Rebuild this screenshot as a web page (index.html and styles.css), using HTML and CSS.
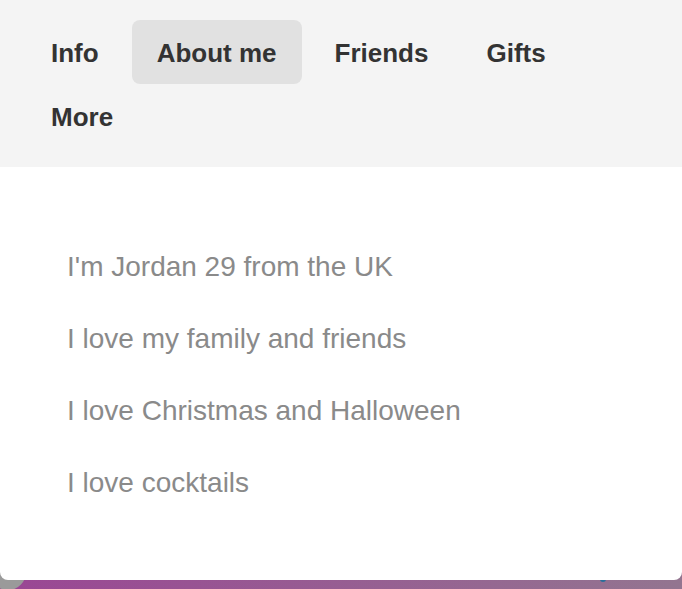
FILE: index.html
```html
<!DOCTYPE html>
<html lang="en">
<head>
    <meta charset="UTF-8">
    <meta name="viewport" content="width=device-width, initial-scale=1.0">
    <title>About me</title>
    <link rel="stylesheet" href="styles.css">
</head>
<body>
    <div class="card">
        <!-- Tabs -->
        <nav class="tabs">
            <a href="#">Info</a>
            <a class="active" href="#">About me</a>
            <a href="#">Friends</a>
            <a href="#">Gifts</a>
            <a href="#">More</a>
        </nav>

        <!-- About me list -->
        <ul class="about">
            <li>I'm Jordan 29 from the UK</li>
            <li>I love my family and friends</li>
            <li>I love Christmas and Halloween</li>
            <li>I love cocktails</li>
        </ul>
    </div>

    <div class="bottom-bar">
        <span class="avatar"></span>
        <span class="dot"></span>
    </div>
</body>
</html>
```

FILE: styles.css
```css
body {
    margin: 0;
    padding: 0;
    font-family: 'Liberation Sans', Arial, sans-serif;
    background: linear-gradient(to right, #9a4694, #937590);
    height: 589px;
    overflow: hidden;
}

.card {
    position: relative;
    z-index: 2;
    height: 580px;
    background-color: #ffffff;
    border-radius: 0 0 8px 8px;
    overflow: hidden;
}

/* Tabs */
.tabs {
    background-color: #f4f4f4;
    padding: 20px 20px 19px 26px;
    display: flex;
    flex-wrap: wrap;
    column-gap: 8px;
}

.tabs a {
    display: flex;
    align-items: center;
    box-sizing: border-box;
    height: 64px;
    padding: 3px 25px 0;
    color: #333333;
    font-size: 26px;
    font-weight: bold;
    text-decoration: none;
    border-radius: 8px;
}

.tabs a.active {
    background-color: #e1e1e1;
}

/* About list */
.about {
    list-style: none;
    margin: 0;
    padding: 64px 20px 0 67px;
}

.about li {
    padding: 20px 0;
    font-size: 28px;
    line-height: 32px;
    color: #8a8a8a;
}

/* Bottom bar behind the card */
.bottom-bar {
    position: relative;
    z-index: 1;
    height: 9px;
}

.avatar {
    position: absolute;
    left: -10px;
    top: -26px;
    width: 36px;
    height: 36px;
    border-radius: 50%;
    background-color: #9a9a9a;
}

.dot {
    position: absolute;
    left: 600px;
    top: -4px;
    width: 6px;
    height: 6px;
    border-radius: 50%;
    background-color: #2a6f9a;
}
```
